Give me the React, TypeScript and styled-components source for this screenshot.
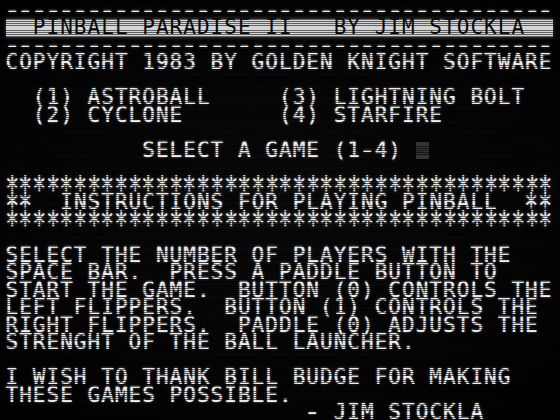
import React from 'react';
import styled, { createGlobalStyle } from 'styled-components';

// ── Apple II 40x24 text screen ─────────────────────────────────
const CELL = 13.675;   // 547px / 40 columns
const ROW = 17.5;      // 420px / 24 rows

const GlobalStyle = createGlobalStyle`
  html, body { margin: 0; padding: 0; background: #000; }
`;

const Monitor = styled.div`
  position: relative;
  width: 560px;
  height: 420px;
  overflow: hidden;
  background: radial-gradient(ellipse at center, #0a0a0a 0%, #040404 70%, #000 100%);
`;

const Screen = styled.div`
  padding: 1.5px 0 0 5.5px;
  font-family: "DejaVu Sans Mono", "Liberation Mono", monospace;
  font-size: 21px;
  letter-spacing: 1.03px;
  color: #ededed;
  text-shadow: 0 0 3px rgba(255, 255, 255, 0.35), 0 0 1px rgba(255, 255, 255, 0.5);
`;

const Line = styled.div<{ $inverse?: boolean }>`
  width: ${CELL * 40}px;
  height: ${ROW}px;
  line-height: ${ROW}px;
  white-space: pre;
  ${({ $inverse }) => $inverse && `
    background: #d6d6d6;
    color: #0a0a0a;
    text-shadow: none;
    box-shadow: 0 0 4px rgba(255,255,255,0.3);
  `}
`;

// asterisks and dashes in the Apple font fill the cell far more than ours do
const Star = styled.span`
  display: inline-block;
  transform: translateY(5px) scale(1.1, 1.7);
`;

const Dash = styled.span`
  display: inline-block;
  transform: scaleX(1.38);
`;

const Cursor = styled.span`
  display: inline-block;
  width: ${CELL - 0.5}px;
  height: 16.5px;
  vertical-align: top;
  margin-top: 0.5px;
  background: #333;
`;

// dark gaps between scanlines, laid over the whole tube
const Scanlines = styled.div`
  position: absolute;
  inset: 0;
  pointer-events: none;
  background: repeating-linear-gradient(
    to bottom,
    rgba(0, 0, 0, 0) 0px,
    rgba(0, 0, 0, 0) 1.35px,
    rgba(0, 0, 0, 0.55) 1.35px,
    rgba(0, 0, 0, 0.55) 2.1875px
  );
`;

const DASHES = '-'.repeat(40);
const STARS = '*'.repeat(40);

interface ScreenLine {
  text: string;
  inverse?: boolean;
  cursor?: boolean;
}

const lines: ScreenLine[] = [
  { text: DASHES },
  { text: '  PINBALL PARADISE II   BY JIM STOCKLA  ', inverse: true },
  { text: DASHES },
  { text: 'COPYRIGHT 1983 BY GOLDEN KNIGHT SOFTWARE' },
  { text: '' },
  { text: '  (1) ASTROBALL     (3) LIGHTNING BOLT' },
  { text: '  (2) CYCLONE       (4) STARFIRE' },
  { text: '' },
  { text: '          SELECT A GAME (1-4) ', cursor: true },
  { text: '' },
  { text: STARS },
  { text: '**  INSTRUCTIONS FOR PLAYING PINBALL  **' },
  { text: STARS },
  { text: '' },
  { text: 'SELECT THE NUMBER OF PLAYERS WITH THE' },
  { text: 'SPACE BAR.  PRESS A PADDLE BUTTON TO' },
  { text: 'START THE GAME.  BUTTON (0) CONTROLS THE' },
  { text: 'LEFT FLIPPERS.  BUTTON (1) CONTROLS THE' },
  { text: 'RIGHT FLIPPERS.  PADDLE (0) ADJUSTS THE' },
  { text: 'STRENGHT OF THE BALL LAUNCHER.' },
  { text: '' },
  { text: 'I WISH TO THANK BILL BUDGE FOR MAKING' },
  { text: 'THESE GAMES POSSIBLE.' },
  { text: '                      - JIM STOCKLA' },
];

// split a line into plain runs and the glyphs that need stretching
const renderText = (text: string) => {
  const parts: React.ReactNode[] = [];
  let run = '';
  const flush = () => { if (run) { parts.push(run); run = ''; } };
  [...text].forEach((ch, i) => {
    if (ch === '*') { flush(); parts.push(<Star key={i}>*</Star>); }
    else if (ch === '-') { flush(); parts.push(<Dash key={i}>-</Dash>); }
    else run += ch;
  });
  flush();
  return parts;
};

export default function App() {
  return (
    <>
      <GlobalStyle />
      <Monitor>
        <Screen>
          {lines.map((l, i) => (
            <Line key={i} $inverse={l.inverse}>
              {renderText(l.text)}
              {l.cursor && <Cursor />}
            </Line>
          ))}
        </Screen>
        <Scanlines />
      </Monitor>
    </>
  );
}
